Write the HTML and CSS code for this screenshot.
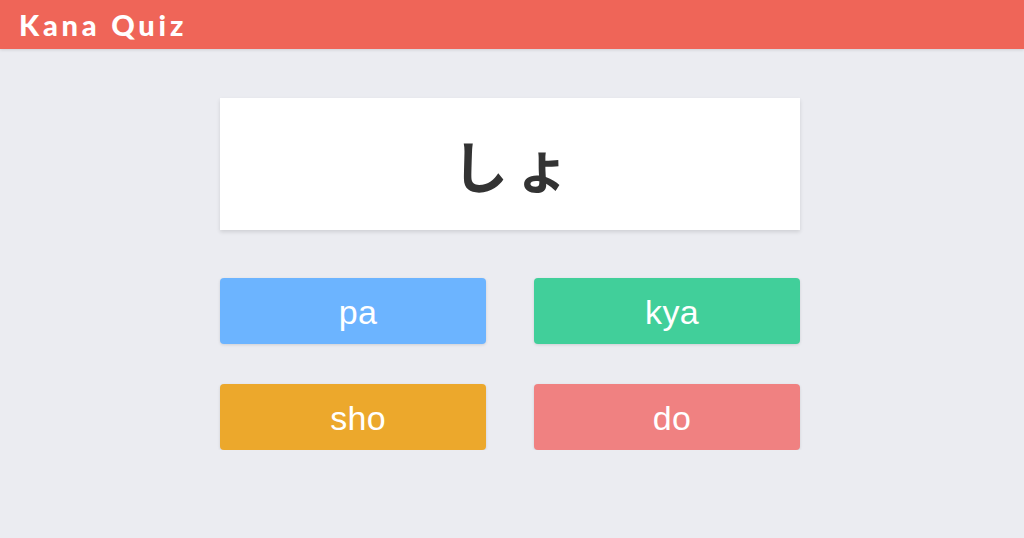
FILE: index.html
```html
<!DOCTYPE html>
<html lang="ja">
<head>
<meta charset="utf-8">
<title>Kana Quiz</title>
<link rel="stylesheet" href="styles.css">
</head>
<body>
<header class="topbar">
  <h1 class="logo">Kana Quiz</h1>
</header>
<main class="quiz">
  <section class="card">
    <span class="kana">しょ</span>
  </section>
  <div class="choices">
    <button class="choice choice-blue">pa</button>
    <button class="choice choice-green">kya</button>
    <button class="choice choice-orange">sho</button>
    <button class="choice choice-red">do</button>
  </div>
</main>
</body>
</html>
```
FILE: styles.css
```css
* { box-sizing: border-box; }
html, body {
  margin: 0;
  padding: 0;
  background: #ebecf1;
  font-family: "Liberation Sans", Arial, sans-serif;
}
.topbar {
  height: 49px;
  background: #ef6558;
  box-shadow: 0 1px 3px rgba(0,0,0,0.12);
  display: flex;
  align-items: center;
  padding-left: 19px;
}
.logo {
  margin: 0;
  color: #fff;
  font-family: "Lato", "Noto Sans", sans-serif;
  font-weight: 900;
  font-size: 29px;
  letter-spacing: 3.8px;
  line-height: 1;
}
.quiz {
  width: 584px;
  padding-right: 4px;
  margin: 0 auto;
  padding-top: 49px;
}
.card {
  height: 132px;
  background: #fff;
  box-shadow: 0 2px 4px rgba(0,0,0,0.12);
  display: flex;
  align-items: center;
  justify-content: center;
}
.kana {
  font-family: "Noto Sans CJK JP", sans-serif;
  font-weight: 700;
  font-size: 56px;
  color: #333;
  letter-spacing: 6px;
  padding-left: 8px;
  line-height: 1;
}
.choices {
  margin-top: 48px;
  display: grid;
  grid-template-columns: 266px 266px;
  column-gap: 48px;
  row-gap: 40px;
}
.choice {
  height: 66px;
  border: none;
  border-radius: 4px;
  color: #fff;
  font-family: "Liberation Sans", Arial, sans-serif;
  font-size: 34px;
  letter-spacing: 0.3px;
  padding: 3px 0 0 10px;
  box-shadow: 0 1px 3px rgba(0,0,0,0.12);
  cursor: pointer;
}
.choice-blue { background: #6cb4ff; }
.choice-green { background: #41cf9a; }
.choice-orange { background: #eca82c; }
.choice-red { background: #f08181; }
```
